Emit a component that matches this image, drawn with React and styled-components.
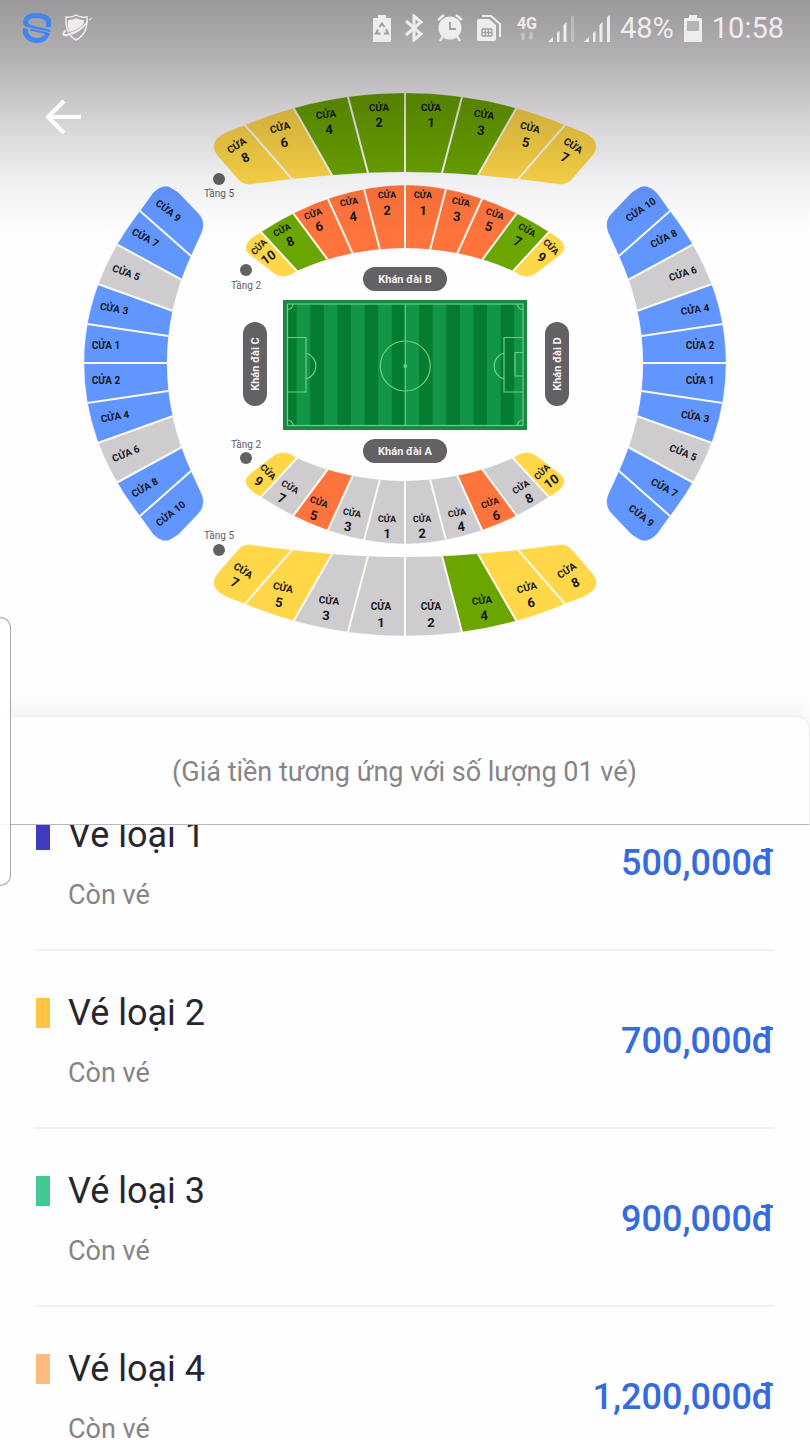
import React from "react";
import styled, { createGlobalStyle } from "styled-components";

const colors = {
  yellow: "#ffd748",
  green: "#6ba500",
  orange: "#ff733c",
  blue: "#6296ff",
  grey: "#cfccd0",
  badge: "#636164",
};

const GlobalStyle = createGlobalStyle`
  * {
    box-sizing: border-box;
  }
  body {
    margin: 0;
    background: #fefdff;
    font-family: Roboto, "Liberation Sans", sans-serif;
  }
`;

const Page = styled.div`
  position: relative;
  height: 100vh;
  overflow: hidden;
`;

/* The header and the map share one grid cell, so the shade lies over the map */
const Hero = styled.section`
  display: grid;
  > * {
    grid-area: 1 / 1;
  }
`;

const Map = styled.svg`
  display: block;
  width: 100%;
  height: auto;
  font-family: Roboto, "Liberation Sans", sans-serif;
`;

const Header = styled.header`
  position: relative;
  z-index: 1;
  align-self: start;
  height: 230px;
  background: linear-gradient(
    rgba(6, 0, 6, 0.4) 0%,
    rgba(6, 0, 6, 0.29) 28%,
    rgba(6, 0, 6, 0.17) 52%,
    rgba(6, 0, 6, 0.06) 78%,
    rgba(6, 0, 6, 0) 100%
  );
`;

const StatusBar = styled.div`
  display: flex;
  align-items: center;
  height: 56px;
  padding: 0 26px 0 22px;
  color: #efecef;
`;

const IconGroup = styled.div`
  display: flex;
  align-items: center;
  gap: ${({ $gap }) => $gap}px;
  &:last-child {
    margin-left: auto;
  }
  svg {
    display: block;
    flex: none;
  }
`;

const Network = styled.div`
  display: flex;
  flex-direction: column;
  align-items: center;
  width: 22px;
  font-size: 16px;
  line-height: 16px;
  font-weight: 700;
`;

const StatusText = styled.span`
  font-size: 29px;
  line-height: 36px;
`;

const BackButton = styled.button`
  display: grid;
  place-items: center;
  width: 48px;
  height: 48px;
  margin: 37px 0 0 39px;
  padding: 0;
  border: 0;
  background: none;
  color: #fff;
`;

const Sheet = styled.main`
  position: relative;
`;

const SheetHeader = styled.h1`
  position: relative;
  z-index: 1;
  margin: 0;
  height: 109px;
  padding-top: 38px;
  border: solid #ececf0;
  border-width: 1px 1px 1px 0;
  border-bottom-color: #b9b7bc;
  border-radius: 14px 14px 0 0;
  background: #fefefe;
  box-shadow: 0 -8px 16px rgba(70, 50, 90, 0.06);
  font-size: 27px;
  line-height: 34px;
  font-weight: 400;
  text-align: center;
  color: #868487;
`;

/* The list is scrolled a little way under the sheet header */
const TicketList = styled.ul`
  margin: -52px 0 0;
  padding: 0 36px;
  list-style: none;
`;

const Ticket = styled.li`
  display: flex;
  align-items: center;
  justify-content: space-between;
  padding: 42px 0 38px;
  border-bottom: 2px solid #f2f1f4;
`;

const TicketInfo = styled.div`
  display: flex;
  flex-direction: column;
  gap: 24px;
`;

const TicketName = styled.h2`
  display: flex;
  align-items: center;
  gap: 18px;
  margin: 0;
  font-size: 36px;
  line-height: 40px;
  font-weight: 400;
  color: #26262c;
  &::before {
    content: "";
    width: 14px;
    height: 30px;
    background: ${({ $color }) => $color};
  }
`;

const TicketState = styled.span`
  padding-left: 32px;
  font-size: 27px;
  line-height: 32px;
  color: #868487;
`;

const Price = styled.strong`
  font-size: 36px;
  line-height: 40px;
  font-weight: 500;
  color: #356bdc;
`;

const EdgePanel = styled.div`
  position: absolute;
  z-index: 2;
  top: 617px;
  left: 0;
  width: 11px;
  height: 269px;
  border: 1px solid #a9a7aa;
  border-left: 0;
  border-radius: 0 12px 12px 0;
  background: rgba(255, 255, 255, 0.85);
`;

/* Stand outlines; dividers run [outerX, outerY, innerX, innerY] from the end
   of the stand to its middle. The first one lies outside of the outline. */
const shapes = {
  tier5: {
    outline:
      "M405 93Q322 93 245 125L227 132Q207 141 217 155L237 178Q243 186 253 184Q340 172 405 172Q470 172 557 184Q567 186 573 178L593 155Q603 141 583 132L565 125Q488 93 405 93Z",
    dividers: [
      [195, 150, 240, 195],
      [245, 125, 291, 178],
      [293, 107, 332, 175],
      [348, 97, 368, 173],
      [405, 93, 405, 172],
    ],
  },
  tier2: {
    outline:
      "M405 185Q332 186 261 232L253 237Q240 247 250 255L272 272Q282 280 292 274L297 271Q345 249 405 248Q465 249 513 271L518 274Q528 280 538 272L560 255Q570 247 557 237L549 232Q478 186 405 185Z",
    dividers: [
      [232, 250, 270, 290],
      [261, 232, 297, 271],
      [293, 213, 328, 260],
      [328, 199, 353, 254],
      [364, 189, 380, 250],
      [405, 185, 405, 248],
    ],
  },
  side: {
    outline:
      "M84 363Q84 283 140 211L153 193Q164 181 176 190L198 213Q206 221 202 232L191 256Q167 308 167 363Q167 419 191 471L202 495Q206 506 198 514L176 537Q164 546 153 534L140 516Q84 444 84 363Z",
    dividers: [
      [150, 175, 215, 215],
      [140, 211, 191, 256],
      [118, 245, 182, 280],
      [98, 284, 173, 311],
      [88, 324, 168, 336],
      [84, 363, 167, 363],
    ],
  },
};

const { yellow: Y, green: G, orange: O, blue: B, grey: N } = colors;

const stands = [
  { shape: "tier5", fills: [Y, Y, G, G, G, G, Y, Y] },
  { shape: "tier2", fills: [Y, G, O, O, O, O, O, O, G, Y] },
  {
    shape: "tier2",
    fills: [Y, N, O, N, N, N, N, O, N, Y],
    transform: "matrix(1 0 0 -1 0 729)",
  },
  {
    shape: "tier5",
    fills: [Y, Y, N, N, N, G, Y, Y],
    transform: "matrix(1 0 0 -1 0 729)",
  },
  { shape: "side", fills: [B, B, N, B, B, B, B, N, B, B] },
  {
    shape: "side",
    fills: [B, B, N, B, B, B, B, N, B, B],
    transform: "matrix(-1 0 0 1 810 0)",
  },
];

// gate, x, y, angle, number x, number y
const tier5Gates = [
  [8, 237, 146, -33, 245, 157],
  [6, 280, 128, -15, 284, 142],
  [4, 326, 115, -6, 329, 129],
  [2, 379, 108, -2, 379, 122],
  [1, 431, 108, 2, 431, 122],
  [3, 484, 115, 8, 481, 130],
  [5, 530, 128, 15, 526, 142],
  [7, 573, 146, 33, 565, 157],
  [7, 243, 571, 33, 235, 582],
  [5, 283, 588, 12, 279, 602],
  [3, 329, 601, 5, 326, 615],
  [1, 381, 607, 0, 381, 622],
  [2, 431, 607, 0, 431, 622],
  [4, 482, 601, -6, 484, 615],
  [6, 527, 588, -14, 531, 602],
  [8, 567, 571, -33, 575, 582],
];

const tier2Gates = [
  [10, 259, 247, -45, 268, 257],
  [8, 282, 230, -28, 290, 241],
  [6, 313, 214, -20, 319, 226],
  [4, 349, 202, -10, 353, 216],
  [2, 387, 195, -2, 387, 210],
  [1, 423, 195, 2, 423, 210],
  [3, 461, 202, 10, 457, 216],
  [5, 495, 214, 20, 489, 226],
  [7, 527, 230, 30, 518, 241],
  [9, 551, 247, 45, 542, 257],
  [9, 268, 472, 45, 259, 481],
  [7, 290, 487, 30, 282, 498],
  [5, 319, 502, 20, 314, 515],
  [3, 352, 513, 10, 348, 526],
  [1, 387, 519, 2, 387, 533],
  [2, 422, 519, -2, 422, 533],
  [4, 457, 513, -10, 461, 526],
  [6, 490, 503, -18, 496, 515],
  [8, 521, 487, -32, 529, 498],
  [10, 542, 472, -45, 551, 481],
];

const sideGates = [
  [9, 168, 211, 38],
  [7, 145, 238, 28],
  [5, 126, 273, 20],
  [3, 114, 309, 10],
  [1, 106, 346, 0],
  [2, 106, 381, 0],
  [4, 115, 417, -10],
  [6, 126, 454, -22],
  [8, 145, 488, -30],
  [10, 171, 514, -38],
  [10, 641, 210, -35],
  [8, 664, 239, -28],
  [6, 683, 274, -18],
  [4, 695, 310, -8],
  [2, 700, 346, 0],
  [1, 700, 381, 0],
  [3, 695, 417, 10],
  [5, 683, 453, 22],
  [7, 664, 488, 28],
  [9, 641, 516, 38],
];

const standNames = [
  { text: "Khán đài B", x: 405, y: 279 },
  { text: "Khán đài A", x: 405, y: 451 },
  { text: "Khán đài C", x: 255, y: 364, angle: -90 },
  { text: "Khán đài D", x: 557, y: 364, angle: -90 },
];

const levels = [
  { text: "Tầng 5", x: 219, y: 193, dotY: 179 },
  { text: "Tầng 2", x: 246, y: 285, dotY: 270 },
  { text: "Tầng 2", x: 246, y: 444, dotY: 458 },
  { text: "Tầng 5", x: 219, y: 535, dotY: 550 },
];

const tickets = [
  { name: "Vé loại 1", state: "Còn vé", price: "500,000đ", color: "#3f3cbe" },
  { name: "Vé loại 2", state: "Còn vé", price: "700,000đ", color: "#ffc542" },
  { name: "Vé loại 3", state: "Còn vé", price: "900,000đ", color: "#45c792" },
  { name: "Vé loại 4", state: "Còn vé", price: "1,200,000đ", color: "#ffba80" },
];

// Makes a divider longer at both ends, so that it passes the curved outline
const extend = ([x1, y1, x2, y2], k = 0.15) => [
  x1 - (x2 - x1) * k,
  y1 - (y2 - y1) * k,
  x2 + (x2 - x1) * k,
  y2 + (y2 - y1) * k,
];

const Stand = ({ shape, fills, transform }) => {
  const { outline, dividers } = shapes[shape];
  const mirror = ([x1, y1, x2, y2]) =>
    shape === "side"
      ? [x1, 727 - y1, x2, 727 - y2]
      : [810 - x1, y1, 810 - x2, y2];
  const all = [
    ...dividers,
    ...dividers.slice(0, -1).reverse().map(mirror),
  ].map((divider) => extend(divider));

  return (
    <g transform={transform}>
      <g clipPath={`url(#${shape})`}>
        {fills.map((fill, i) => {
          const [a, b, c, d] = all[i];
          const [e, f, g, h] = all[i + 1];
          return (
            <polygon key={i} fill={fill} points={`${a},${b} ${c},${d} ${g},${h} ${e},${f}`} />
          );
        })}
        {all.slice(1, -1).map(([x1, y1, x2, y2], i) => (
          <line key={i} x1={x1} y1={y1} x2={x2} y2={y2} stroke="#fbfbf2" strokeWidth="2" />
        ))}
      </g>
      <path d={outline} fill="none" stroke="#fff" strokeOpacity="0.2" />
    </g>
  );
};

const GateLabel = ({ gate: [number, x, y, angle, nx, ny], size, numberSize }) => (
  <>
    <text transform={`translate(${x} ${y}) rotate(${angle})`} dy="3" fontSize={size}>
      CỬA
    </text>
    <text transform={`translate(${nx} ${ny}) rotate(${angle * 0.8})`} dy="5" fontSize={numberSize}>
      {number}
    </text>
  </>
);

const Pitch = () => (
  <g>
    <rect x="283" y="300" width="244" height="130" fill="#119648" />
    {[...Array(9)].map((_, i) => (
      <rect key={i} x={283 + i * 27.2} y="300" width="13.6" height="130" fill="#047d30" />
    ))}
    <rect x="285" y="302" width="240" height="126" fill="none" stroke="#1a8742" strokeWidth="4" />
    <g fill="none" stroke="#72cd80" strokeWidth="1.2">
      <rect x="287.5" y="304" width="235.5" height="121.5" />
      <path d="M405.3 304V425.5" />
      <circle cx="405.3" cy="366" r="25" />
      <path d="M287.5 337.5H306V392H287.5M306 353A13.5 13.5 0 0 1 306 379" />
      <path d="M523 337.5H504V392H523M504 353A13.5 13.5 0 0 0 504 379M523 352.5H515V376H523" />
      <path d="M293 304A5.5 5.5 0 0 1 287.5 309.5M517.5 304A5.5 5.5 0 0 0 523 309.5M293 425.5A5.5 5.5 0 0 0 287.5 420M517.5 425.5A5.5 5.5 0 0 1 523 420" />
    </g>
    <circle cx="405.3" cy="366" r="2" fill="#72cd80" />
  </g>
);

const StadiumMap = () => (
  <Map viewBox="0 0 810 716" role="img" aria-label="Sơ đồ sân vận động">
    <defs>
      {Object.entries(shapes).map(([id, { outline }]) => (
        <clipPath key={id} id={id}>
          <path d={outline} />
        </clipPath>
      ))}
    </defs>
    {stands.map((stand, i) => (
      <Stand key={i} {...stand} />
    ))}
    <Pitch />
    <g textAnchor="middle" fontWeight="700" fill="#14181c">
      {tier5Gates.map((gate, i) => (
        <GateLabel key={i} gate={gate} size="10" numberSize="13" />
      ))}
      {tier2Gates.map((gate, i) => (
        <GateLabel key={i} gate={gate} size="9" numberSize="13" />
      ))}
      {sideGates.map(([number, x, y, angle], i) => (
        <text key={i} transform={`translate(${x} ${y}) rotate(${angle})`} dy="3" fontSize="10">
          CỬA {number}
        </text>
      ))}
    </g>
    <g textAnchor="middle">
      {standNames.map(({ text, x, y, angle = 0 }) => (
        <g key={text} transform={`translate(${x} ${y}) rotate(${angle})`}>
          <rect x="-42" y="-12" width="84" height="24" rx="12" fill={colors.badge} />
          <text dy="4" fontSize="11" fontWeight="700" fill="#f4f3f4">
            {text}
          </text>
        </g>
      ))}
      {levels.map(({ text, x, y, dotY }) => (
        <g key={y} fill={colors.badge}>
          <circle cx={x} cy={dotY} r="6" />
          <text x={x} y={y} dy="4" fontSize="10">
            {text}
          </text>
        </g>
      ))}
    </g>
  </Map>
);

const AppLogo = () => (
  <svg width="30" height="30" viewBox="0 0 30 30" fill="#4285ee">
    <path d="M29 14H24V9Q21 5 15 5Q6 5 6 9Q6 11 9 12L29 17L28 19L5 14Q1 13 1 9Q2 0 15 0Q25 0 29 6Z" />
    <path d="M1 15L6 16V19Q9 25 15 25Q20 25 23 21L8 17.5L9 15.5L28 20Q25 30 15 30Q5 30 1 21Z" />
  </svg>
);

const ShieldIcon = () => (
  <svg width="32" height="28" viewBox="0 0 32 28" fill="none" stroke="currentColor">
    <path d="M4 3Q10 4 14 1Q18 4 25 3Q26 20 14 26Q3 20 4 3Z" strokeWidth="1.5" />
    <path d="M6 6Q11 6 14 4Q18 6 22 6Q22 13 17 17Q12 20 8 19Q5 14 6 6Z" fill="currentColor" stroke="none" />
    <path d="M3 17Q-1 22 5 21Q17 19 25 8" strokeWidth="2" strokeLinecap="round" />
    <path d="M5 19Q16 17 24 8" stroke="#a9a7aa" strokeWidth="0.8" />
    <path d="M27 6L30 4" strokeWidth="1" />
  </svg>
);

const RecycleBatteryIcon = () => (
  <svg width="18" height="27" viewBox="0 0 18 27" fill="currentColor">
    <path d="M5 0H13V3H17Q18 3 18 4V26Q18 27 17 27H1Q0 27 0 26V4Q0 3 1 3H5Z" />
    <path
      d="M6.5 12L9 8.5L11.5 12M13 14L15 18.5H11M7.5 18.5H3L5 14.5"
      fill="none"
      stroke="#9f9d9f"
      strokeWidth="2"
    />
  </svg>
);

const BluetoothIcon = () => (
  <svg width="18" height="28" viewBox="0 0 18 28" fill="none" stroke="currentColor" strokeWidth="3">
    <path d="M1 7L16 20L9 26V2L16 8L1 21" />
  </svg>
);

const AlarmIcon = () => (
  <svg width="26" height="28" viewBox="0 0 26 28" fill="none" stroke="currentColor" strokeWidth="2.4">
    <circle cx="13" cy="14" r="11.5" fill="currentColor" stroke="none" />
    <path d="M1 6L7 1M19 1L25 6M6 22L3 27M20 22L23 27" />
    <path d="M13 8V15H19" stroke="#a3a1a3" strokeWidth="2" />
  </svg>
);

const SimIcon = () => (
  <svg width="25" height="27" viewBox="0 0 25 27" fill="none" stroke="currentColor">
    <path d="M2 4H12L19 10V24Q19 26 17 26H2Q0 26 0 24V6Q0 4 2 4Z" fill="currentColor" stroke="none" />
    <path d="M5 1H14L23 9V22" strokeWidth="2" />
    <path d="M5 14V21M15 14V21M8.5 14V21M11.5 14V21M5 14H15M5 17.5H15M5 21H15" stroke="#a3a1a3" strokeWidth="1.3" />
  </svg>
);

const DataArrows = () => (
  <svg width="14" height="8" viewBox="0 0 14 8" fill="currentColor" opacity="0.4">
    <path d="M3 0L6 3H4.5V8H1.5V3H0ZM11 8L8 5H9.5V0H12.5V5H14Z" />
  </svg>
);

const SignalIcon = ({ weak }) => (
  <svg width="26" height="27" viewBox="0 0 26 27" fill="currentColor">
    <path d="M0 27L5 22V27ZM9 18L11.5 16V27H9ZM15.5 10L18.5 7V27H15.5Z" />
    <path d="M23 2L26 0V27H23Z" opacity={weak ? 0.35 : 1} />
  </svg>
);

const BatteryIcon = () => (
  <svg width="18" height="27" viewBox="0 0 18 27" fill="currentColor">
    <path d="M5 0H13V3H17Q18 3 18 4V26Q18 27 17 27H1Q0 27 0 26V4Q0 3 1 3H5Z" />
    <path d="M3 6H15V16H3Z" fill="#b5b3b5" />
  </svg>
);

const BackIcon = () => (
  <svg width="38" height="38" viewBox="0 0 38 38" fill="none" stroke="currentColor" strokeWidth="4">
    <path d="M37 19H4M20 3L4 19L20 35" strokeLinejoin="round" />
  </svg>
);

const App = () => {
  return (
    <Page>
      <GlobalStyle />
      <Hero>
        <StadiumMap />
        <Header>
          <StatusBar>
            <IconGroup $gap={10}>
              <AppLogo />
              <ShieldIcon />
            </IconGroup>
            <IconGroup $gap={10}>
              <IconGroup as="span" $gap={14}>
                <RecycleBatteryIcon />
                <BluetoothIcon />
                <AlarmIcon />
                <SimIcon />
                <Network>
                  4G
                  <DataArrows />
                </Network>
              </IconGroup>
              <SignalIcon weak />
              <SignalIcon />
              <StatusText>48%</StatusText>
              <BatteryIcon />
              <StatusText>10:58</StatusText>
            </IconGroup>
          </StatusBar>
          <BackButton type="button" aria-label="Quay lại">
            <BackIcon />
          </BackButton>
        </Header>
      </Hero>
      <Sheet>
        <SheetHeader>(Giá tiền tương ứng với số lượng 01 vé)</SheetHeader>
        <TicketList>
          {tickets.map(({ name, state, price, color }) => (
            <Ticket key={name}>
              <TicketInfo>
                <TicketName $color={color}>{name}</TicketName>
                <TicketState>{state}</TicketState>
              </TicketInfo>
              <Price>{price}</Price>
            </Ticket>
          ))}
        </TicketList>
      </Sheet>
      <EdgePanel />
    </Page>
  );
};

export default App;
